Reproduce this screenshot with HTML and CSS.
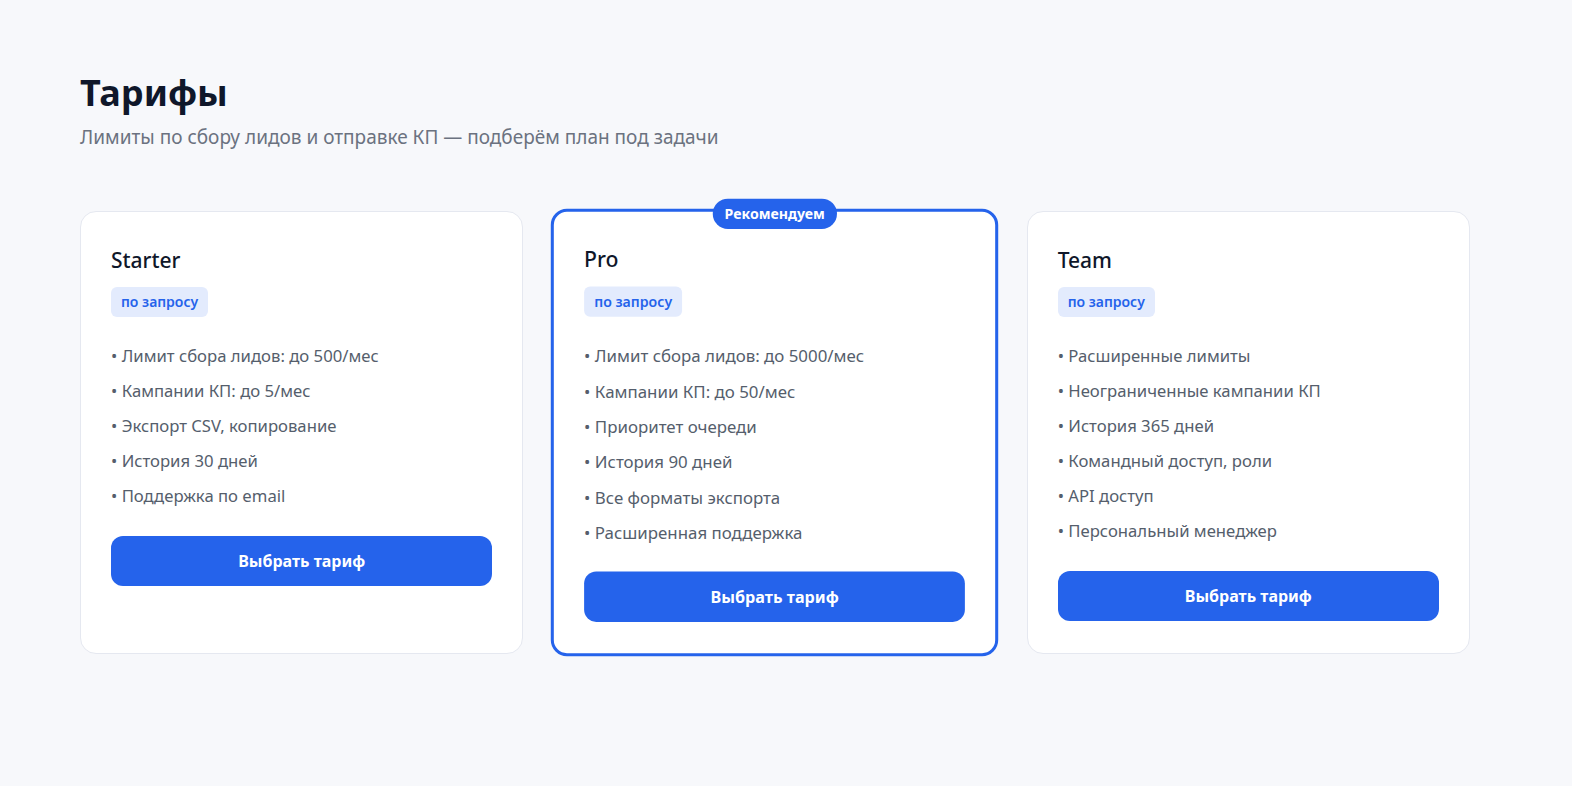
FILE: index.html
```html
<!DOCTYPE html>
<html lang="ru">
<head>
<meta charset="utf-8">
<title>Тарифы</title>
<link rel="stylesheet" href="styles.css">
</head>
<body>
<main class="page">
  <header class="head">
    <h1 class="title">Тарифы</h1>
    <p class="subtitle">Лимиты по сбору лидов и отправке КП — подберём план под задачи</p>
  </header>
  <section class="plans">
    <article class="card">
      <h3 class="card-name">Starter</h3>
      <span class="price">по запросу</span>
      <ul class="features">
        <li>Лимит сбора лидов: до 500/мес</li>
        <li>Кампании КП: до 5/мес</li>
        <li>Экспорт CSV, копирование</li>
        <li>История 30 дней</li>
        <li>Поддержка по email</li>
      </ul>
      <button class="btn">Выбрать тариф</button>
    </article>
    <article class="card card-featured">
      <span class="ribbon">Рекомендуем</span>
      <h3 class="card-name">Pro</h3>
      <span class="price">по запросу</span>
      <ul class="features">
        <li>Лимит сбора лидов: до 5000/мес</li>
        <li>Кампании КП: до 50/мес</li>
        <li>Приоритет очереди</li>
        <li>История 90 дней</li>
        <li>Все форматы экспорта</li>
        <li>Расширенная поддержка</li>
      </ul>
      <button class="btn">Выбрать тариф</button>
    </article>
    <article class="card">
      <h3 class="card-name">Team</h3>
      <span class="price">по запросу</span>
      <ul class="features">
        <li>Расширенные лимиты</li>
        <li>Неограниченные кампании КП</li>
        <li>История 365 дней</li>
        <li>Командный доступ, роли</li>
        <li>API доступ</li>
        <li>Персональный менеджер</li>
      </ul>
      <button class="btn">Выбрать тариф</button>
    </article>
  </section>
</main>
</body>
</html>
```

FILE: styles.css
```css
* { box-sizing: border-box; }
html, body {
  margin: 0;
  padding: 0;
  background: #f7f8fb;
  font-family: "Noto Sans", "Open Sans", Arial, sans-serif;
  color: #111827;
}
.page {
  padding: 70px 80px 80px;
}
.head { margin-bottom: 61px; }
.title {
  margin: 0;
  font-size: 36px;
  line-height: 46px;
  font-weight: 700;
  color: #0f172a;
}
.subtitle {
  margin: 8px 0 0;
  font-size: 19px;
  line-height: 26px;
  color: #6b7280;
}
.plans {
  width: 1390px;
  display: grid;
  grid-template-columns: repeat(3, 1fr);
  gap: 30px;
  align-items: stretch;
}
.card {
  position: relative;
  display: flex;
  flex-direction: column;
  align-items: flex-start;
  background: #fff;
  border: 1px solid #e5e8f0;
  border-radius: 16px;
  padding: 30px;
}
.card-featured {
  border: 3px solid #2563eb;
  padding: 29px 30px 31px;
  transform: scale(1.01);
}
.card-featured .features { margin-bottom: 26px; }
.ribbon {
  position: absolute;
  top: -13px;
  left: 50%;
  transform: translateX(-50%);
  background: #2563eb;
  color: #fff;
  font-size: 14px;
  font-weight: 700;
  line-height: 30px;
  height: 30px;
  padding: 0 12px;
  border-radius: 15px;
  white-space: nowrap;
}
.card-name {
  margin: 4px 0 13px;
  font-size: 21px;
  line-height: 28px;
  font-weight: 500;
  color: #0f172a;
}
.price {
  display: inline-block;
  background: #e3ebfd;
  color: #2563eb;
  font-size: 14px;
  font-weight: 600;
  line-height: 30px;
  height: 30px;
  padding: 0 10px;
  border-radius: 6px;
}
.features {
  list-style: none;
  margin: 26px 0 28px;
  padding: 0;
  display: flex;
  flex-direction: column;
  gap: 10px;
}
.features li {
  font-size: 16.7px;
  line-height: 25px;
  color: #555e6c;
}
.features li::before {
  content: "• ";
}
.btn {
  width: 100%;
  height: 50px;
  border: 0;
  border-radius: 12px;
  background: #2563eb;
  color: #fff;
  font-family: inherit;
  font-size: 16px;
  font-weight: 700;
  cursor: pointer;
}
```
